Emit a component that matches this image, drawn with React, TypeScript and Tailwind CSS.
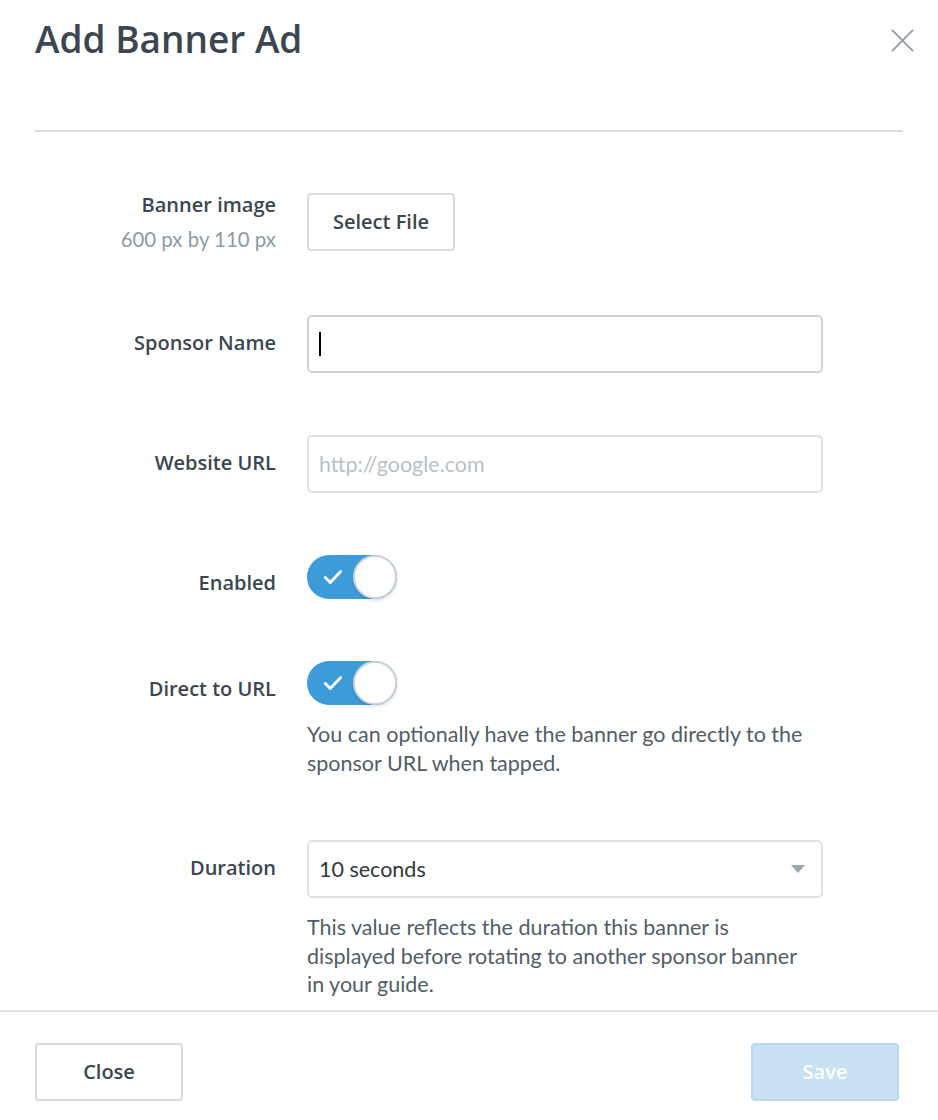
import { ReactNode } from "react";

const labelFont = { fontFamily: '"Open Sans", sans-serif' };

function Row({ label, children }: { label: string; children: ReactNode }) {
  return (
    <div className="flex">
      <div className="w-[276px] text-right pt-[14px] shrink-0">
        <div className="text-[20px] font-semibold leading-[28px] text-[#3b4650]">{label}</div>
      </div>
      <div className="ml-[31px] w-[516px]">{children}</div>
    </div>
  );
}

function Toggle() {
  return (
    <div className="relative w-[90px] h-[44px] rounded-full bg-[#3d9bd9]">
      <svg className="absolute left-[15px] top-[11px] w-[22px] h-[22px]" viewBox="0 0 20 20" fill="none">
        <path d="M3 10.5l4.5 4.5L17 5" stroke="white" strokeWidth={2.6} strokeLinecap="round" strokeLinejoin="round" />
      </svg>
      <div className="absolute right-0 top-0 w-[44px] h-[44px] rounded-full bg-white border-2 border-[#cdd4da] shadow-[0_2px_3px_rgba(0,0,0,0.12)]"></div>
    </div>
  );
}

function Help({ children, tight }: { children: ReactNode; tight?: boolean }) {
  return (
    <p
      className={
        "mt-[15px] w-[505px] text-[21.5px] text-[#525d67] font-['Lato',sans-serif] " +
        (tight ? "leading-[28.5px]" : "leading-[29px]")
      }
    >
      {children}
    </p>
  );
}

export default function App() {
  return (
    <div className="w-[938px] h-[1120px] bg-white flex flex-col overflow-hidden" style={labelFont}>
      <div className="flex items-start justify-between pl-[35px] pr-[24px] pt-[14px]">
        <h1 className="text-[37px] font-semibold leading-[50px] text-[#3b4650]">Add Banner Ad</h1>
        <svg className="mt-[15px] w-[23px] h-[23px]" viewBox="0 0 24 24" fill="none">
          <path d="M1 1l22 22M23 1L1 23" stroke="#8d9ba6" strokeWidth={1.8} />
        </svg>
      </div>
      <div className="mx-[35px] mt-[66px] h-[2px] bg-[#d9dee2]"></div>

      <div className="flex-1 overflow-hidden pt-[59px] flex flex-col gap-[62px]">
        <div className="flex items-center">
          <div className="w-[276px] text-right shrink-0">
            <div className="text-[20px] font-semibold leading-[28px] text-[#3b4650]">Banner image</div>
            <div className="mt-[6px] text-[20.4px] leading-[28px] text-[#8d9ba6] font-['Lato',sans-serif]">600 px by 110 px</div>
          </div>
          <div className="ml-[31px]">
            <button className="w-[148px] h-[58px] rounded-[4px] border-2 border-[#d6dce1] bg-white text-[20px] font-semibold text-[#3b4650]">
              Select File
            </button>
          </div>
        </div>

        <Row label="Sponsor Name">
          <div className="h-[58px] rounded-[5px] border-2 border-[#cdd3d9] flex items-center px-[10px]">
            <span className="w-[2px] h-[24px] bg-black"></span>
          </div>
        </Row>

        <Row label="Website URL">
          <div className="h-[58px] rounded-[5px] border-2 border-[#dde2e6] flex items-center px-[10px]">
            <span className="text-[21.5px] text-[#b9c1c7] font-['Lato',sans-serif]">http://google.com</span>
          </div>
        </Row>

        <Row label="Enabled">
          <Toggle />
        </Row>

        <Row label="Direct to URL">
          <Toggle />
          <Help>You can optionally have the banner go directly to the sponsor URL when tapped.</Help>
        </Row>

        <Row label="Duration">
          <div className="h-[58px] rounded-[5px] border-2 border-[#dde2e6] flex items-center justify-between pl-[10px] pr-[16px]">
            <span className="text-[21.5px] text-[#2e3840] font-['Lato',sans-serif]">10 seconds</span>
            <svg className="w-[14px] h-[8px]" viewBox="0 0 14 8">
              <path d="M0 0h14L7 8z" fill="#9aa7b1" />
            </svg>
          </div>
          <Help tight>
            This value reflects the duration this banner is displayed before rotating to another sponsor banner in your guide.
          </Help>
        </Row>
      </div>

      <div className="h-[110px] shrink-0 border-t-2 border-[#dde2e6] flex items-start justify-between pl-[35px] pr-[39px] pt-[31px]">
        <button className="w-[148px] h-[58px] rounded-[4px] border-2 border-[#d6dce1] bg-white text-[20px] font-semibold text-[#3b4650]">
          Close
        </button>
        <button className="w-[148px] h-[58px] rounded-[4px] border-2 border-[#bcd8ec] bg-[#c8e2f3] text-[20px] font-semibold text-white">
          Save
        </button>
      </div>
    </div>
  );
}
